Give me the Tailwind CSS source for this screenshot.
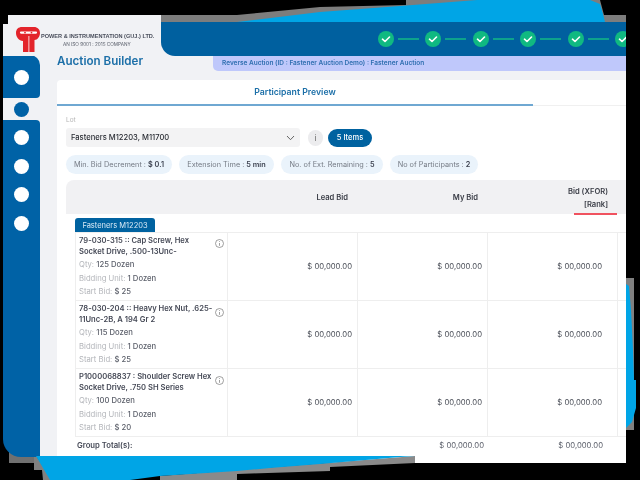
<!DOCTYPE html>
<html lang="en">
<head>
  <meta charset="UTF-8" />
  <title>Auction Builder</title>
  <script src="https://cdn.jsdelivr.net/npm/@tailwindcss/browser@4"></script>
</head>
<body class="bg-black">
  <div class="relative w-[640px] h-[480px] overflow-hidden bg-black font-['Inter',sans-serif] blur-[0.35px]">

    <!-- cyan card behind the window -->
    <svg class="absolute inset-0" width="640" height="480" viewBox="0 0 640 480">
      <polygon points="161,15 237,15 320,7 406,5 406,0 600,0 604,15 626,15 626,30 161,30" fill="#7d7d7d"/>
      <polygon points="237,22 320,12 400,6 477,0 590,0 600,4 603,14 605,22 605,40 237,40" fill="#00a5e6"/>
      <polygon points="626,278 634,278 634,430 626,430" fill="#808080"/>
      <path d="M626 284 L629 286 L631 310 L633 350 L634 380 L636 380 L636 408 L632 422 L626 428 Z" fill="#00a5e6"/>
      <polygon points="9,440 36,440 36,463 9,463" fill="#707070"/>
    </svg>

    <!-- window -->
    <div class="absolute left-[3px] top-[15px] w-[623px] h-[448px] flex flex-col">
      <!-- header -->
      <div class="flex h-[41px] shrink-0">
        <div class="w-[158px] shrink-0 bg-[#f1f2f5] relative flex items-start pt-[12px] pl-[13px]">
          <svg width="24" height="25" viewBox="0 0 24 25" class="shrink-0">
            <path d="M6 0h12c3.500 0 6 2.500 6 6s-2.500 7-5.500 7V25H7V14C3 14 0 10 0 6s2.500-6 6-6z" fill="#e3242b"/>
            <path d="M5 4.500h15a1 1 0 0 1 0 2.200H5a1 1 0 0 1 0-2.200z" fill="#fff"/>
            <circle cx="9" cy="5.600" r="0.900" fill="#e3242b"/><circle cx="15.500" cy="5.600" r="0.900" fill="#e3242b"/>
            <path d="M12.500 9h0.800v16h-0.800z" fill="#fff"/>
          </svg>
          <div class="ml-[1px] pt-[7px] leading-none whitespace-nowrap">
            <div class="text-[5.6px] font-bold text-[#4a4f5c] font-['Liberation_Sans',sans-serif]">POWER &amp; INSTRUMENTATION (GUJ.) LTD.</div>
            <div class="text-[4.7px] text-[#5b606c] mt-[2.500px] ml-[22px]">AN ISO 9001 : 2015 COMPANY</div>
          </div>
          <div class="absolute left-0 top-0 w-[5px] h-[9px] bg-black"></div>
        </div>
        <div class="flex-1 min-w-0 flex flex-col">
          <div class="h-[7px]"></div>
          <div class="flex-1 bg-[#f1f2f5]">
            <div class="h-full bg-[#00609f] rounded-bl-[14px] overflow-hidden flex items-center pl-[217px] whitespace-nowrap">
              <svg width="260" height="18" viewBox="0 0 260 18" class="shrink-0">
                <g fill="none" stroke="#12b886" stroke-width="1.500">
                  <path d="M20 9h21M67 9h21M115 9h21M162 9h21M210 9h21"/>
                </g>
                <g fill="#10b981">
                  <circle cx="8" cy="9" r="8"/><circle cx="55" cy="9" r="8"/><circle cx="103" cy="9" r="8"/>
                  <circle cx="150" cy="9" r="8"/><circle cx="198" cy="9" r="8"/><circle cx="245" cy="9" r="8"/>
                </g>
                <g fill="none" stroke="#fff" stroke-width="1.600" stroke-linecap="round" stroke-linejoin="round">
                  <path d="M4.500 9.200l2.500 2.300 4.500-4.500M51.500 9.200l2.500 2.300 4.500-4.500M99.500 9.200l2.500 2.300 4.500-4.500M146.500 9.200l2.500 2.300 4.500-4.500M194.500 9.200l2.500 2.300 4.500-4.500M241.500 9.200l2.500 2.300 4.500-4.500"/>
                </g>
              </svg>
            </div>
          </div>
        </div>
      </div>

      <!-- body -->
      <div class="flex flex-1 min-h-0">
        <!-- side nav -->
        <div class="w-[37px] h-[401px] flex flex-col shrink-0 bg-[linear-gradient(#f1f2f5_90%,transparent_90%)]">
          <div class="h-[43px] bg-[#0062a6] rounded-tr-[10px] rounded-br-[4px] flex items-center justify-center -mt-[1px] pt-[1px]">
            <span class="w-[15px] h-[15px] rounded-full bg-white -ml-[1px]"></span>
          </div>
          <div class="h-[22px] flex items-center justify-center">
            <span class="w-[15px] h-[15px] rounded-full bg-[#0062a6] -ml-[1px]"></span>
          </div>
          <div class="flex-1 bg-[#0062a6] rounded-tr-[4px] rounded-bl-[18px] flex flex-col items-center pt-[10px] gap-[13.500px]">
            <span class="w-[15px] h-[15px] rounded-full bg-white -ml-[1px]"></span>
            <span class="w-[15px] h-[15px] rounded-full bg-white -ml-[1px]"></span>
            <span class="w-[15px] h-[15px] rounded-full bg-white -ml-[1px]"></span>
            <span class="w-[15px] h-[15px] rounded-full bg-white -ml-[1px]"></span>
          </div>
        </div>

        <!-- main -->
        <div class="flex-1 min-w-0 bg-[#f1f2f5] pl-[17px] flex flex-col">
          <div class="h-[24px] flex shrink-0">
            <h1 class="w-[156px] text-[11.600px] leading-[10px] font-semibold text-[#1c6fa8]">Auction Builder</h1>
            <div class="flex-1 h-[15px] bg-[#bfc8fb] rounded-bl-[5px] pl-[9px] text-[6.500px] leading-[14px] font-semibold text-[#2f6fb0] whitespace-nowrap">Reverse Auction (ID : Fastener Auction Demo) : Fastener Auction</div>
          </div>

          <div class="flex-1 min-h-0 bg-white rounded-tl-[4px] flex flex-col">
            <div class="h-[26px] shrink-0 flex flex-col">
              <div class="w-[476px] h-[24px] text-center text-[8.700px] leading-[25px] font-semibold text-[#1c6fa8]">Participant Preview</div>
              <div class="h-[2px] border-b border-[#f0f0f0]"><div class="w-[476px] h-[2px] bg-[#6fa8d2]"></div></div>
            </div>

            <div class="pl-[9px]">
              <div class="text-[6.500px] leading-[8px] text-[#b5b5b5] mt-[10px]">Lot</div>
              <div class="flex items-center mt-[4px]">
                <div class="w-[234px] h-[19px] bg-[#f3f3f4] rounded-[3px] flex items-center justify-between pl-[5px] pr-[5px] text-[7.600px] font-medium text-[#2a2d34]">
                  <span>Fasteners M12203, M11700</span>
                  <svg width="9" height="6" viewBox="0 0 9 6" fill="none" stroke="#555" stroke-width="0.900"><path d="M1 1l3.500 3.700L8 1"/></svg>
                </div>
                <span class="ml-[8px] w-[15px] h-[16px] rounded-full bg-[#ececee] text-[8px] text-center leading-[16px] text-[#666]">i</span>
                <span class="ml-[5px] w-[44px] h-[18px] rounded-full bg-[#0062a0] text-white text-[7.500px] font-medium text-center leading-[17px]">5 Items</span>
              </div>
              <div class="flex gap-[7px] mt-[8px] text-[7.300px] leading-[19px] text-[#757b85] whitespace-nowrap text-center">
                <span class="w-[106px] h-[19px] rounded-full bg-[#eaf3fb]">Min. Bid Decrement : <b class="font-semibold text-[#3d4250]">$ 0.1</b></span>
                <span class="w-[95px] h-[19px] rounded-full bg-[#eaf3fb]">Extension Time : <b class="font-semibold text-[#3d4250]">5 min</b></span>
                <span class="w-[102px] h-[19px] rounded-full bg-[#eaf3fb]">No. of Ext. Remaining : <b class="font-semibold text-[#3d4250]">5</b></span>
                <span class="w-[88px] h-[19px] rounded-full bg-[#eaf3fb]">No of Participants : <b class="font-semibold text-[#3d4250]">2</b></span>
              </div>

              <!-- table head -->
              <div class="mt-[6px] h-[34px] bg-[#f1f1f3] rounded-tl-[8px] grid grid-cols-[161px_130px_130px_130px_9px] items-center text-[7.600px] font-semibold text-[#3a3d46] text-right">
                <div></div>
                <div class="pr-[9px] pt-[1px]">Lead Bid</div>
                <div class="pr-[9px] pt-[1px]">My Bid</div>
                <div class="relative pr-[9px] pt-[1px] leading-[13px]">Bid (XFOR)<br>[Rank]
                  <span class="absolute right-0 -bottom-[4px] w-[43px] h-[2px] bg-[#f0525f]"></span>
                </div>
                <div></div>
              </div>

              <div class="pl-[9px]">
                <div class="mt-[4px] w-[80px] h-[14px] bg-[#0062a0] rounded-t-[3px] text-[7.500px] leading-[15px] text-[#d8e9f5] text-center">Fasteners M12203</div>

                <!-- rows -->
                <div class="border-t border-l border-[#eeeeee] text-[7.700px] text-[#4b4f58]">
                  <div class="h-[68px] grid grid-cols-[152px_130px_130px_130px_9px] border-b border-[#eeeeee]">
                    <div class="relative border-r border-[#eeeeee] pl-[3px] pt-[2px]">
                      <div class="w-[128px] text-[7.600px] leading-[11px] font-semibold text-[#454956]">79-030-315 :: Cap Screw, Hex Socket Drive, .500-13Unc-</div>
                      <div class="leading-[13.500px] mt-[1px] text-[#b3b5ba]">Qty: <span class="text-[#5b5f6a] font-medium">125 Dozen</span></div>
                      <div class="leading-[13.500px] text-[#b3b5ba]">Bidding Unit: <span class="text-[#5b5f6a] font-medium">1 Dozen</span></div>
                      <div class="leading-[13.500px] text-[#b3b5ba]">Start Bid: <span class="text-[#5b5f6a] font-medium">$ 25</span></div>
                      <svg class="absolute right-[3px] top-[6px]" width="9" height="9" viewBox="0 0 9 9" fill="none" stroke="#777" stroke-width="0.700"><circle cx="4.500" cy="4.500" r="4"/><path d="M4.500 4v2.800M4.500 2.200v.8"/></svg>
                    </div>
                    <div class="border-r border-[#eeeeee] flex items-center justify-end pr-[5px]">$ 00,000.00</div>
                    <div class="border-r border-[#eeeeee] flex items-center justify-end pr-[5px]">$ 00,000.00</div>
                    <div class="border-r border-[#eeeeee] flex items-center justify-end pr-[15px]">$ 00,000.00</div>
                    <div></div>
                  </div>
                  <div class="h-[68px] grid grid-cols-[152px_130px_130px_130px_9px] border-b border-[#eeeeee]">
                    <div class="relative border-r border-[#eeeeee] pl-[3px] pt-[2px]">
                      <div class="w-[136px] text-[7.600px] leading-[11px] font-semibold text-[#454956]">78-030-204 :: Heavy Hex Nut, .625-11Unc-2B, A 194 Gr 2</div>
                      <div class="leading-[13.500px] mt-[1px] text-[#b3b5ba]">Qty: <span class="text-[#5b5f6a] font-medium">115 Dozen</span></div>
                      <div class="leading-[13.500px] text-[#b3b5ba]">Bidding Unit: <span class="text-[#5b5f6a] font-medium">1 Dozen</span></div>
                      <div class="leading-[13.500px] text-[#b3b5ba]">Start Bid: <span class="text-[#5b5f6a] font-medium">$ 25</span></div>
                      <svg class="absolute right-[3px] top-[7px]" width="9" height="9" viewBox="0 0 9 9" fill="none" stroke="#777" stroke-width="0.700"><circle cx="4.500" cy="4.500" r="4"/><path d="M4.500 4v2.800M4.500 2.200v.8"/></svg>
                    </div>
                    <div class="border-r border-[#eeeeee] flex items-center justify-end pr-[5px]">$ 00,000.00</div>
                    <div class="border-r border-[#eeeeee] flex items-center justify-end pr-[5px]">$ 00,000.00</div>
                    <div class="border-r border-[#eeeeee] flex items-center justify-end pr-[15px]">$ 00,000.00</div>
                    <div></div>
                  </div>
                  <div class="h-[68px] grid grid-cols-[152px_130px_130px_130px_9px] border-b border-[#eeeeee]">
                    <div class="relative border-r border-[#eeeeee] pl-[3px] pt-[2px]">
                      <div class="w-[136px] text-[7.600px] leading-[11px] font-semibold text-[#454956]">P1000068837 : Shoulder Screw Hex Socket Drive, .750 SH Series</div>
                      <div class="leading-[13.500px] mt-[1px] text-[#b3b5ba]">Qty: <span class="text-[#5b5f6a] font-medium">100 Dozen</span></div>
                      <div class="leading-[13.500px] text-[#b3b5ba]">Bidding Unit: <span class="text-[#5b5f6a] font-medium">1 Dozen</span></div>
                      <div class="leading-[13.500px] text-[#b3b5ba]">Start Bid: <span class="text-[#5b5f6a] font-medium">$ 20</span></div>
                      <svg class="absolute right-[3px] top-[7px]" width="9" height="9" viewBox="0 0 9 9" fill="none" stroke="#777" stroke-width="0.700"><circle cx="4.500" cy="4.500" r="4"/><path d="M4.500 4v2.800M4.500 2.200v.8"/></svg>
                    </div>
                    <div class="border-r border-[#eeeeee] flex items-center justify-end pr-[5px]">$ 00,000.00</div>
                    <div class="border-r border-[#eeeeee] flex items-center justify-end pr-[5px]">$ 00,000.00</div>
                    <div class="border-r border-[#eeeeee] flex items-center justify-end pr-[15px]">$ 00,000.00</div>
                    <div></div>
                  </div>
                </div>

                <div class="h-[18px] grid grid-cols-[152px_130px_130px_130px] items-center text-[7.700px] text-[#5b5f6a] text-right">
                  <div class="text-left pl-[2px] font-semibold text-[#454956]">Group Total(s):</div>
                  <div></div>
                  <div class="-mr-[2px] pr-[5px]">$ 00,000.00</div>
                  <div class="pr-[14px]">$ 00,000.00</div>
                </div>
              </div>
            </div>
          </div>
        </div>
      </div>
    </div>

    <!-- cyan strip running under the window -->
    <svg class="absolute inset-0 pointer-events-none" width="640" height="480" viewBox="0 0 640 480">
      <polygon points="34,457 37,457 52,480 43,480 42,470 34,470" fill="#808080"/>
      <polygon points="160,476 415,456 415,463 330,467 330,471 237,474 237,480 160,480" fill="#8a8a8a"/>
      <polygon points="36,456 415,456 400,457 320,464 270,468 237,471 160,476 130,480 50,480" fill="#00a5e6"/>
    </svg>
  </div>
</body>
</html>
